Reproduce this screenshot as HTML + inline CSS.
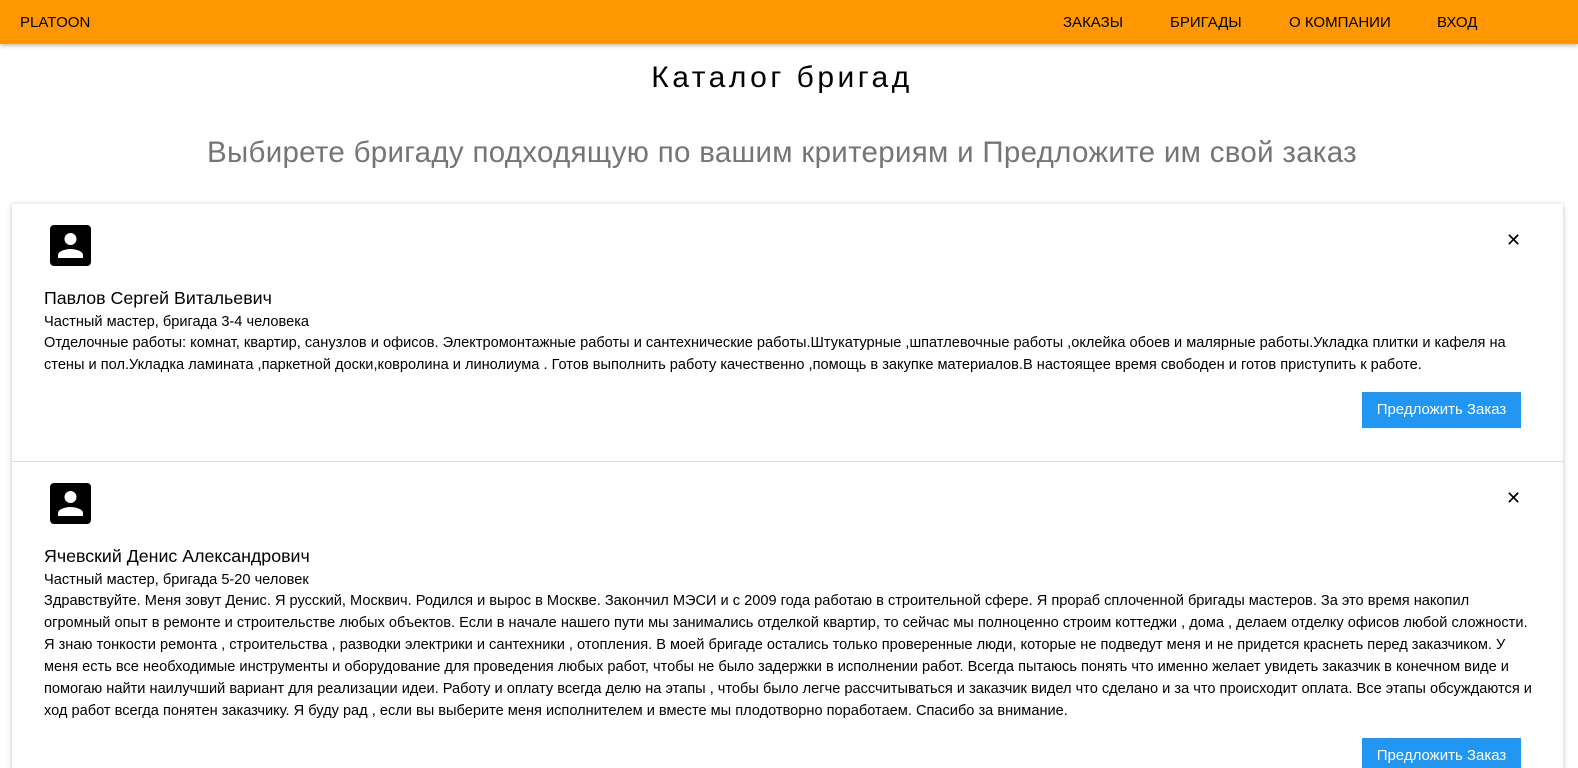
<!DOCTYPE html>
<html style="overflow:hidden"><head><meta charset="utf-8"><style>
html,body{margin:0;overflow:hidden}
body{background:#fff;font-family:"Liberation Sans","DejaVu Sans",sans-serif;color:#000;width:1578px;height:768px;position:relative}
.nav{height:44px;background:#ff9800;box-shadow:0 2px 4px rgba(0,0,0,.25);position:relative;font-size:15px}
.nav span{position:absolute;top:14px}
h1{position:absolute;top:61px;left:0;width:1564px;text-align:center;margin:0;font-weight:400;font-size:30px;letter-spacing:3.5px}
h2{position:absolute;top:136px;left:0;width:1564px;text-align:center;margin:0;font-weight:400;font-size:29.5px;color:#757575;letter-spacing:0.3px}
.card{position:absolute;left:12px;width:1551px;background:#fff;box-shadow:0 1px 5px rgba(0,0,0,.25)}
.sec{position:relative;border-bottom:1px solid #ddd}
.ico{position:absolute;left:38px;top:21px}
.x{position:absolute;left:1494px;top:26px;font-size:18px}
.name{position:absolute;left:32px;font-size:17.8px}
.sub{position:absolute;left:32px;font-size:14.6px}
.txt{position:absolute;left:32px;width:1500px;font-size:14.6px;line-height:22px;white-space:nowrap}
.btn{position:absolute;left:1350px;width:159px;height:36px;background:#2196f3;color:#fff;font-size:15px;text-align:center;line-height:36px}
</style></head><body>
<div class="nav"><span style="left:20px">PLATOON</span><span style="left:1063px">ЗАКАЗЫ</span><span style="left:1170px">БРИГАДЫ</span><span style="left:1289px">О КОМПАНИИ</span><span style="left:1437px">ВХОД</span></div>
<h1>Каталог бригад</h1>
<h2>Выбирете бригаду подходящую по вашим критериям и Предложите им свой заказ</h2>
<div class="card" style="top:204px;height:580px">
<div class="sec" style="height:257px">
<svg class="ico" width="41" height="41" viewBox="0 0 41 41"><rect width="41" height="41" rx="4" fill="#000"/><circle cx="20.5" cy="14" r="6" fill="#fff"/><path d="M8 33v-3c0-4 8-6 12.5-6S33 26 33 30v3z" fill="#fff"/></svg>
<div class="x">✕</div>
<div class="name" style="top:84px">Павлов Сергей Витальевич</div>
<div class="sub" style="top:110px">Частный мастер, бригада 3-4 человека</div>
<div class="txt" style="top:128px">Отделочные работы: комнат, квартир, санузлов и офисов. Электромонтажные работы и сантехнические работы.Штукатурные ,шпатлевочные работы ,оклейка обоев и малярные работы.Укладка плитки и кафеля на<br>стены и пол.Укладка ламината ,паркетной доски,ковролина и линолиума . Готов выполнить работу качественно ,помощь в закупке материалов.В настоящее время свободен и готов приступить к работе.</div>
<div class="btn" style="top:188px">Предложить Заказ</div>
</div>
<div class="sec" style="height:320px;border:0">
<svg class="ico" width="41" height="41" viewBox="0 0 41 41"><rect width="41" height="41" rx="4" fill="#000"/><circle cx="20.5" cy="14" r="6" fill="#fff"/><path d="M8 33v-3c0-4 8-6 12.5-6S33 26 33 30v3z" fill="#fff"/></svg>
<div class="x">✕</div>
<div class="name" style="top:84px">Ячевский Денис Александрович</div>
<div class="sub" style="top:110px">Частный мастер, бригада 5-20 человек</div>
<div class="txt" style="top:128px">Здравствуйте. Меня зовут Денис. Я русский, Москвич. Родился и вырос в Москве. Закончил МЭСИ и с 2009 года работаю в строительной сфере. Я прораб сплоченной бригады мастеров. За это время накопил<br>огромный опыт в ремонте и строительстве любых объектов. Если в начале нашего пути мы занимались отделкой квартир, то сейчас мы полноценно строим коттеджи , дома , делаем отделку офисов любой сложности.<br>Я знаю тонкости ремонта , строительства , разводки электрики и сантехники , отопления. В моей бригаде остались только проверенные люди, которые не подведут меня и не придется краснеть перед заказчиком. У<br>меня есть все необходимые инструменты и оборудование для проведения любых работ, чтобы не было задержки в исполнении работ. Всегда пытаюсь понять что именно желает увидеть заказчик в конечном виде и<br>помогаю найти наилучший вариант для реализации идеи. Работу и оплату всегда делю на этапы , чтобы было легче рассчитываться и заказчик видел что сделано и за что происходит оплата. Все этапы обсуждаются и<br>ход работ всегда понятен заказчику. Я буду рад , если вы выберите меня исполнителем и вместе мы плодотворно поработаем. Спасибо за внимание.</div>
<div class="btn" style="top:276px">Предложить Заказ</div>
</div>
</div>
</body></html>
